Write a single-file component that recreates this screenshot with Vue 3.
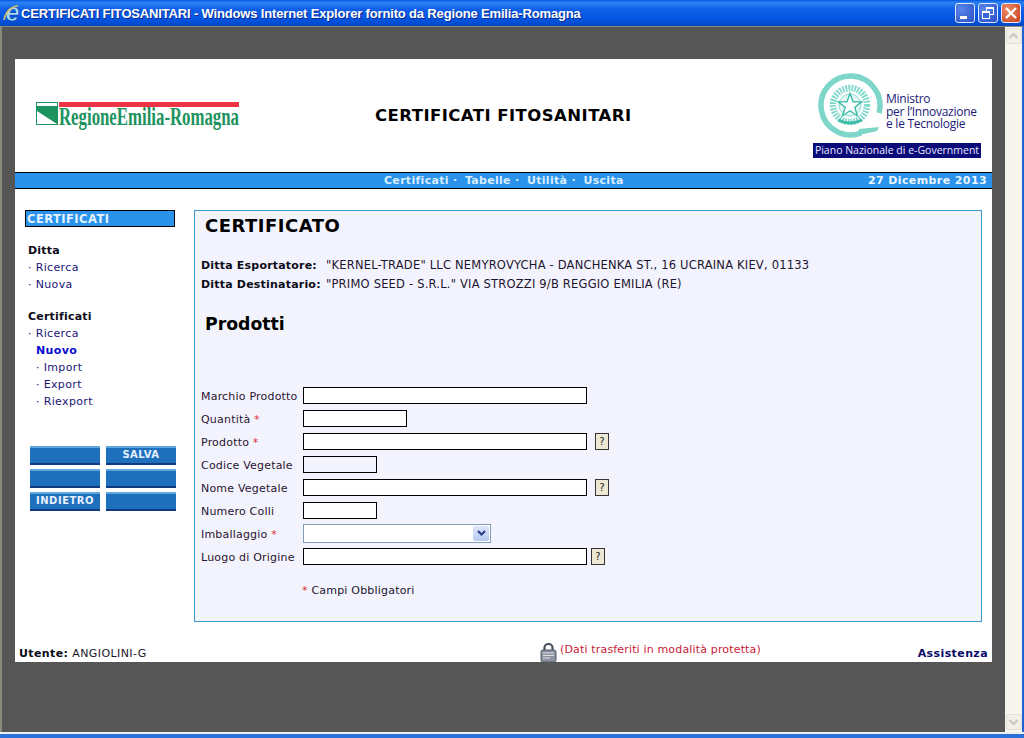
<script setup>
const sideGroups = [
  { title: 'Ditta', links: [{ label: 'Ricerca' }, { label: 'Nuova' }] },
  {
    title: 'Certificati',
    links: [
      { label: 'Ricerca' },
      { label: 'Nuovo', current: true },
      { label: 'Import', sub: true },
      { label: 'Export', sub: true },
      { label: 'Riexport', sub: true },
    ],
  },
]

const actions = ['', 'SALVA', '', '', 'INDIETRO', '']
const menu = ['Certificati', 'Tabelle', 'Utilità', 'Uscita']

const fields = [
  { label: 'Marchio Prodotto', size: 'long' },
  { label: 'Quantità', size: 'mid', required: true },
  { label: 'Prodotto', size: 'long', required: true, help: true },
  { label: 'Codice Vegetale', size: 'short', readonly: true },
  { label: 'Nome Vegetale', size: 'long', help: true },
  { label: 'Numero Colli', size: 'short' },
  { label: 'Imballaggio', required: true, select: true },
  { label: 'Luogo di Origine', size: 'long', help: true, tight: true },
]
</script>

<template>
  <div class="window">
    <div class="titlebar">
      <svg class="ie-icon" width="18" height="26" viewBox="0 -3 18 26">
        <text x="9.5" y="18" text-anchor="middle" class="ie-letter">e</text>
        <path d="M1 17C2 10 8 3 15 3" fill="none" stroke="#d8c070" stroke-width="1.5" />
      </svg>
      <span class="title-text">CERTIFICATI FITOSANITARI - Windows Internet Explorer fornito da Regione Emilia-Romagna</span>
      <div class="win-buttons">
        <div class="win-btn">
          <svg width="20" height="20" viewBox="0 0 20 20"><rect x="5" y="13" width="7" height="3" fill="#fff" /></svg>
        </div>
        <div class="win-btn">
          <svg width="20" height="20" viewBox="0 0 20 20" fill="none" stroke="#fff">
            <rect x="8.5" y="4.5" width="7" height="7" />
            <path d="M8.5 5.5h7" />
            <rect x="4.5" y="8.5" width="7" height="7" fill="#3a66d8" />
            <path d="M4.5 9.5h7" />
          </svg>
        </div>
        <div class="win-btn close">
          <svg width="20" height="20" viewBox="0 0 20 20"><path d="M5 5l10 10M15 5L5 15" stroke="#fff" stroke-width="2.4" /></svg>
        </div>
      </div>
    </div>

    <div class="client">
      <div class="viewport">
        <div class="page">
          <header class="head">
            <div class="logo-left">
              <svg width="204" height="30" viewBox="0 0 204 30">
                <rect x="0.5" y="1.5" width="21" height="22" fill="#fff" stroke="#1d9360" />
                <path d="M1 5h20v18L1 10z" fill="#1d9360" />
                <rect x="23" y="1" width="180" height="5" fill="#ee3344" />
                <text x="23" y="24" textLength="180" lengthAdjust="spacingAndGlyphs" class="logo-text">RegioneEmilia-Romagna</text>
              </svg>
            </div>
            <h1 class="main-title">CERTIFICATI FITOSANITARI</h1>
            <div class="logo-right">
              <div class="ministry">
                <svg width="66" height="68" viewBox="0 0 66 68">
                  <path d="M62 41A29.5 29.5 0 1 0 44 61" fill="none" stroke="#7ed6c9" stroke-width="5.5" />
                  <path d="M40 63.5L60 59l2-4-20 2z" fill="#7ed6c9" />
                  <circle cx="33" cy="33" r="17" fill="none" stroke="#7fd8ca" stroke-width="6.5" stroke-dasharray="1.8 1.2" />
                  <circle cx="33" cy="33" r="11" fill="#e4f7f3" stroke="#8adcd0" />
                  <path d="M33 21.5l3 8.3h8.800l-7 5.400 2.600 8.500-7.400-5-7.400 5 2.600-8.500-7-5.400h8.800z" fill="#fff" stroke="#35b8a4" stroke-width="1.300" />
                  <path d="M21 48q12 6 24 0" fill="none" stroke="#3fbca8" stroke-width="3" />
                </svg>
                <div class="ministry-text">
                  <span>Ministro</span>
                  <span>per l’Innovazione</span>
                  <span>e le Tecnologie</span>
                </div>
              </div>
              <div class="piano">Piano Nazionale di e-Government</div>
            </div>
          </header>

          <nav class="menubar">
            <div class="menu-items">
              <span v-for="(item, i) in menu" :key="item" class="menu-item">{{ item }}<template v-if="i < menu.length - 1"> ·</template></span>
            </div>
            <span class="today">27 Dicembre 2013</span>
          </nav>

          <div class="main">
            <aside class="side">
              <div class="side-title">CERTIFICATI</div>
              <div v-for="group in sideGroups" :key="group.title" class="side-group">
                <div class="side-head">{{ group.title }}</div>
                <div
                  v-for="link in group.links"
                  :key="link.label"
                  class="side-link"
                  :class="{ current: link.current, sub: link.sub }"
                >
                  <template v-if="!link.current">· </template>{{ link.label }}
                </div>
              </div>
              <div class="actions">
                <div v-for="(action, i) in actions" :key="i" class="action">{{ action }}</div>
              </div>
            </aside>

            <section class="panel">
              <h2 class="panel-title">CERTIFICATO</h2>
              <div class="ditta-row"><b>Ditta Esportatore:</b><span>"KERNEL-TRADE" LLC NEMYROVYCHA - DANCHENKA ST., 16 UCRAINA KIEV, 01133</span></div>
              <div class="ditta-row"><b>Ditta Destinatario:</b><span>"PRIMO SEED - S.R.L." VIA STROZZI 9/B REGGIO EMILIA (RE)</span></div>
              <h2 class="panel-title products">Prodotti</h2>

              <div class="form">
                <div v-for="field in fields" :key="field.label" class="form-row">
                  <label class="form-label">{{ field.label }}<span v-if="field.required" class="req"> *</span></label>
                  <div v-if="field.select" class="fake-select">
                    <span class="select-arrow">
                      <svg width="11" height="9" viewBox="0 0 11 9"><path d="M2 2l3.500 3.500L9 2" fill="none" stroke="#2a3f8f" stroke-width="2.200" /></svg>
                    </span>
                  </div>
                  <input v-else class="field" :class="[field.size, { ro: field.readonly }]" type="text" />
                  <button v-if="field.help" class="help" :class="{ tight: field.tight }">?</button>
                </div>
              </div>

              <div class="legend"><span class="req">*</span> Campi Obbligatori</div>
            </section>
          </div>

          <footer class="foot">
            <div class="user"><b>Utente:</b> ANGIOLINI-G</div>
            <div class="secure">
              <svg width="17" height="19" viewBox="0 0 17 19">
                <path d="M4.500 8V4.500a4 3.500 0 0 1 8 0V8" fill="none" stroke="#4a4f5c" stroke-width="2.200" />
                <rect x="1" y="7" width="15" height="12" rx="2" fill="#8d92a0" stroke="#555a68" />
                <path d="M3 10h11M3 12.500h11M3 15h7" stroke="#dfe1e6" />
              </svg>
              <span>(Dati trasferiti in modalità protetta)</span>
            </div>
            <div class="help-link">Assistenza</div>
          </footer>
        </div>
      </div>

      <div class="scrollbar">
        <div class="scroll-btn">
          <svg width="11" height="8" viewBox="0 0 11 8"><path d="M1.500 6l4-4 4 4" fill="none" stroke="#c8c8c0" stroke-width="2" /></svg>
        </div>
        <div class="scroll-btn">
          <svg width="11" height="8" viewBox="0 0 11 8"><path d="M1.500 2l4 4 4-4" fill="none" stroke="#c8c8c0" stroke-width="2" /></svg>
        </div>
      </div>
    </div>
    <div class="status-line"></div>
  </div>
</template>

<style>
html,
body {
  margin: 0;
  overflow: hidden;
}
</style>

<style scoped>
.window {
  width: 1024px;
  height: 738px;
  display: flex;
  flex-direction: column;
  overflow: hidden;
  font-family: "DejaVu Sans", Verdana, sans-serif;
  font-size: 11px;
  letter-spacing: 0.2px;
  color: #1c1430;
}

.titlebar {
  height: 26px;
  flex: none;
  display: flex;
  align-items: center;
  padding-left: 3px;
  background: linear-gradient(#0a58e0 0%, #2a83f5 10%, #0f5fe8 35%, #0452dc 80%, #0347c4 100%);
  box-sizing: border-box;
}

.ie-icon {
  flex: none;
}

.ie-letter {
  font-family: "Liberation Sans", sans-serif;
  font-size: 25px;
  font-weight: bold;
  font-style: italic;
  fill: #a8dcf8;
  stroke: #0b3fa8;
  stroke-width: 0.6px;
}

.title-text {
  font-family: "Liberation Sans", sans-serif;
  font-size: 13px;
  font-weight: bold;
  letter-spacing: -0.16px;
  color: #fff;
  white-space: nowrap;
  text-shadow: 1px 1px 0 #0a2a90;
}

.win-buttons {
  margin-left: auto;
  margin-right: 3px;
  display: flex;
  gap: 3px;
}

.win-btn {
  width: 20px;
  height: 20px;
  border: 1px solid #dfe8ff;
  border-radius: 3px;
  box-sizing: border-box;
  background: radial-gradient(circle at 30% 30%, #5a86e8, #2a4fc8);
  display: flex;
  align-items: center;
  justify-content: center;
  overflow: hidden;
}

.win-btn svg {
  flex: none;
}

.win-btn.close {
  background: radial-gradient(circle at 30% 30%, #ec8a68, #c8401c);
}

.client {
  height: 706px;
  flex: none;
  display: flex;
  background: #565656;
  border-left: 2px solid #8a8a7c;
  border-right: 2px solid #1f62d8;
  border-top: 1px solid #8a8a7c;
  box-sizing: border-box;
}

.viewport {
  width: 1003px;
  flex: none;
  padding: 32px 0 0 13px;
  box-sizing: border-box;
}

.page {
  width: 977px;
  height: 603px;
  background: #fff;
  display: flex;
  flex-direction: column;
}

.head {
  height: 113px;
  flex: none;
  display: flex;
  box-sizing: border-box;
}

.logo-left {
  width: 360px;
  flex: none;
  padding: 42px 0 0 21px;
  box-sizing: border-box;
}

.logo-left svg {
  display: block;
  overflow: visible;
}

.logo-text {
  font-family: "Liberation Serif", serif;
  font-size: 25px;
  font-weight: bold;
  letter-spacing: 0;
  fill: #1d9360;
}

.main-title {
  margin: 48px 0 0;
  width: 438px;
  flex: none;
  font-size: 16.5px;
  line-height: 18px;
  letter-spacing: 0.45px;
  font-weight: bold;
  color: #000;
  white-space: nowrap;
}

.logo-right {
  width: 168px;
  flex: none;
  padding-top: 13px;
  display: flex;
  flex-direction: column;
}

.ministry {
  height: 71px;
  padding-left: 4px;
  display: flex;
}

.ministry svg {
  flex: none;
}

.ministry-text {
  margin: 21px 0 0 3px;
  display: flex;
  flex-direction: column;
  font-family: "Open Sans", sans-serif;
  font-size: 12px;
  line-height: 12.5px;
  letter-spacing: -0.25px;
  color: #1a1a78;
  white-space: nowrap;
}

.piano {
  height: 15px;
  line-height: 15px;
  background: #0a0a78;
  color: #e8e8ff;
  font-family: "Open Sans", sans-serif;
  font-size: 10.5px;
  letter-spacing: 0;
  text-align: center;
  white-space: nowrap;
}

.menubar {
  height: 17px;
  flex: none;
  display: flex;
  align-items: center;
  background: #2a92ea;
  border-top: 1px solid #000;
  border-bottom: 1px solid #000;
  box-sizing: border-box;
  color: #d8eeff;
  font-weight: bold;
  font-size: 11px;
  letter-spacing: 0.3px;
  padding: 0 5px 0 369px;
}

.menu-items {
  display: flex;
  gap: 7.5px;
  white-space: pre;
}

.today {
  margin-left: auto;
  letter-spacing: 0.4px;
  color: #eaf6ff;
}

.main {
  flex: 1;
  display: flex;
  min-height: 0;
}

.side {
  width: 179px;
  flex: none;
  padding: 21px 0 0 10px;
  box-sizing: border-box;
}

.side-title {
  width: 150px;
  height: 17px;
  line-height: 16px;
  padding-left: 1px;
  box-sizing: border-box;
  background: #2a92ea;
  border: 1px solid #000;
  color: #e4f2ff;
  font-size: 11.5px;
  letter-spacing: 0.45px;
  font-weight: bold;
}

.side-group {
  padding-left: 3px;
  margin-top: 15px;
}

.side-head {
  height: 17px;
  line-height: 17px;
  font-weight: bold;
  color: #0c0c18;
}

.side-link {
  height: 17px;
  line-height: 17px;
  color: #1c1478;
  letter-spacing: 0.35px;
  white-space: pre;
}

.side-link.current {
  padding-left: 8px;
  color: #0a0ad0;
  font-weight: bold;
}

.side-link.sub {
  padding-left: 8px;
}

.actions {
  margin: 36px 0 0 5px;
  display: grid;
  grid-template-columns: 70px 70px;
  column-gap: 6px;
  row-gap: 4px;
}

.action {
  height: 19px;
  box-sizing: border-box;
  background: #1f70bc;
  border-top: 2px solid #5ea6dc;
  border-bottom: 2px solid #0f3a80;
  color: #e8f2ff;
  font-size: 10px;
  font-weight: bold;
  text-align: center;
  line-height: 14px;
  letter-spacing: 0.5px;
}

.panel {
  width: 788px;
  height: 412px;
  flex: none;
  margin-top: 21px;
  padding: 0 6px;
  box-sizing: border-box;
  background: #f3f3fd;
  border: 1px solid #3a9ac8;
}

.panel-title {
  margin: 0;
  padding: 3px 0 0 4px;
  height: 27px;
  line-height: 23px;
  box-sizing: content-box;
  font-size: 18px;
  letter-spacing: 0.5px;
  font-weight: bold;
  color: #000;
}

.panel-title + .ditta-row {
  margin-top: 15px;
}

.ditta-row {
  height: 19px;
  line-height: 19px;
  display: flex;
  white-space: pre;
  color: #1c1430;
}

.ditta-row b {
  width: 125px;
  flex: none;
  color: #0c0c18;
}

.ditta-row span {
  font-size: 11.5px;
}

.products {
  margin-top: 16px;
  font-size: 17.3px;
  letter-spacing: 0;
}

.form {
  margin-top: 45px;
}

.form-row {
  height: 23px;
  display: flex;
  align-items: center;
}

.form-label {
  width: 102px;
  flex: none;
  white-space: pre;
  color: #2a1430;
}

.req {
  color: #d8303c;
}

.field {
  height: 17px;
  padding: 0;
  margin: 0 0 2px;
  box-sizing: border-box;
  border: 1px solid #000;
  background: #fff;
}

.field.long {
  width: 284px;
}

.field.mid {
  width: 104px;
}

.field.short {
  width: 74px;
}

.field.ro {
  background: #f3f3fd;
}

.fake-select {
  width: 188px;
  height: 19px;
  margin-bottom: 2px;
  box-sizing: border-box;
  border: 1px solid #7f9db9;
  background: #fff;
  display: flex;
  justify-content: flex-end;
  align-items: center;
  padding-right: 1px;
}

.select-arrow {
  width: 16px;
  height: 15px;
  border-radius: 2px;
  background: linear-gradient(#dfe8fb, #b4c8f2);
  display: flex;
  align-items: center;
  justify-content: center;
}

.help {
  width: 14px;
  height: 17px;
  margin: 0 0 2px 8px;
  padding: 0;
  border: 1px solid #333;
  background: #ece8d4;
  color: #222;
  font-family: inherit;
  font-size: 10px;
  line-height: 14px;
}

.help.tight {
  margin-left: 4px;
}

.legend {
  margin: 14px 0 0 101px;
  line-height: 16px;
  white-space: pre;
}

.foot {
  flex: 1;
  display: flex;
  align-items: flex-end;
  padding: 0 4px;
  min-height: 0;
}

.user {
  width: 521px;
  flex: none;
  line-height: 16px;
  letter-spacing: 0.4px;
  white-space: pre;
}

.user b {
  color: #0c0c18;
}

.secure {
  display: flex;
  color: #c81a38;
}

.secure svg {
  flex: none;
}

.secure span {
  margin: 0 0 0 3px;
  line-height: 14px;
  letter-spacing: 0.16px;
  white-space: pre;
}

.help-link {
  margin-left: auto;
  line-height: 16px;
  letter-spacing: 0.4px;
  font-weight: bold;
  color: #0a0a68;
}

.scrollbar {
  width: 17px;
  flex: none;
  background: #f6f6ef;
  display: flex;
  flex-direction: column;
  justify-content: space-between;
  align-items: center;
  padding: 1px 0 2px;
  box-sizing: border-box;
}

.scroll-btn {
  width: 16px;
  height: 16px;
  border-radius: 2px;
  background: #f0f0e6;
  border: 1px solid #e0e0d6;
  box-sizing: border-box;
  display: flex;
  align-items: center;
  justify-content: center;
}

.status-line {
  flex: 1;
  background: #2a72d8;
  border-top: 2px solid #eef0f4;
}
</style>
